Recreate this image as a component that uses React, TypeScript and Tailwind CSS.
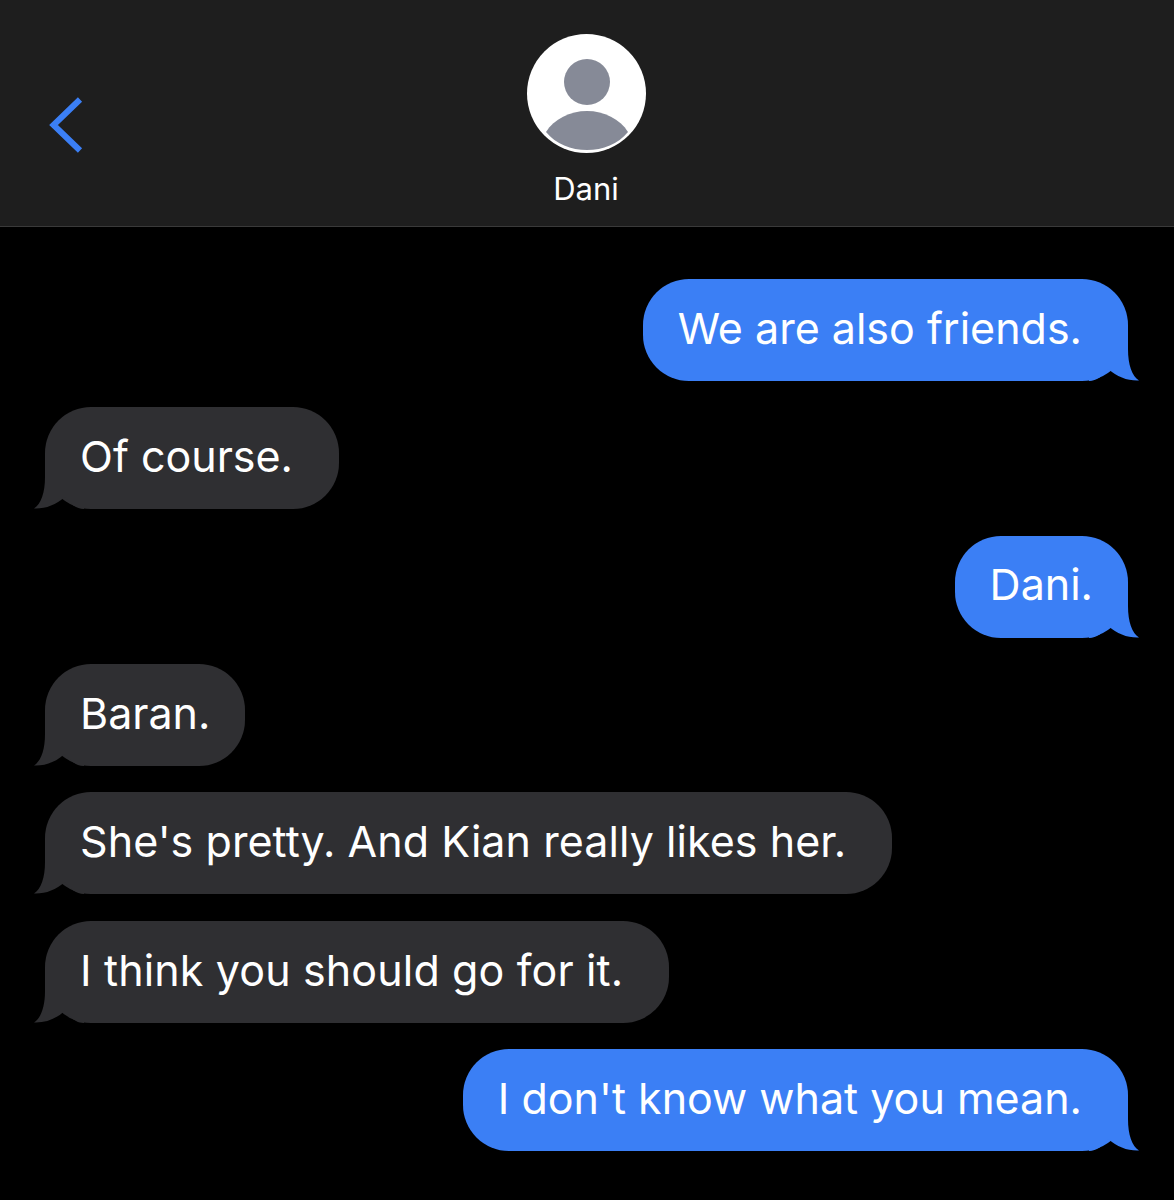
const FONT = "font-['Inter','Liberation_Sans',sans-serif]";

function Tail({ sent }: { sent: boolean }) {
  return (
    <svg
      viewBox="0 0 50 52"
      className={
        sent
          ? "absolute right-[-11px] bottom-0 h-[52px] w-[50px]"
          : "absolute left-[-11px] bottom-0 h-[52px] w-[50px] -scale-x-100"
      }
    >
      <path
        d="M0 0 L39 0 L39 20 C39 36 43 47 50 51.5 C39 52 28 48 19.5 40 C13 47 8 52 0 52 Z"
        fill={sent ? "#3b7ff5" : "#2f2f32"}
      />
    </svg>
  );
}

function Bubble({
  text,
  sent,
  short,
  tracking = "",
}: {
  text: string;
  sent?: boolean;
  short?: boolean;
  tracking?: string;
}) {
  return (
    <div className={sent ? "flex justify-end pr-[46px]" : "flex justify-start pl-[45px]"}>
      <div
        className={[
          "relative flex h-[102px] items-center rounded-[46px] pl-[35px] text-[43px] font-normal text-white whitespace-nowrap",
          sent ? "bg-[#3b7ff5]" : "bg-[#2f2f32]",
          short ? "pr-[35px]" : "pr-[46px]",
        ].join(" ")}
      >
        <Tail sent={!!sent} />
        <span className={`relative top-[-2px] ${tracking}`}>{text}</span>
      </div>
    </div>
  );
}

export default function App() {
  return (
    <div className={`h-[1200px] w-[1174px] overflow-hidden bg-black ${FONT}`}>
      <header className="relative flex h-[227px] flex-col items-center border-b border-[#3a3a3a] bg-[#1e1e1e] pt-[34px]">
        <svg className="absolute left-[46px] top-[94px] h-[62px] w-[40px]" viewBox="0 0 40 62" fill="none">
          <path d="M34 5.5 L7.5 31 L34 56.5" stroke="#3b7ff5" strokeWidth="6" strokeLinejoin="miter" />
        </svg>
        <svg viewBox="0 0 119 119" className="relative left-[-1px] h-[119px] w-[119px]">
          <circle cx="59.5" cy="59.5" r="59.5" fill="#ffffff" />
          <ellipse cx="60" cy="48" rx="23" ry="23" fill="#868a97" />
          <path d="M19 98 C27 85 43 77 60 77 C77 77 93 85 101 98 C91 110 76 116 60 116 C44 116 29 110 19 98 Z" fill="#868a97" />
        </svg>
        <div className="relative left-[-1px] mt-[18px] text-[31px] leading-[36px] text-white">Dani</div>
      </header>
      <main className="flex flex-col gap-[26.4px] pt-[51.8px]">
        <Bubble sent text="We are also friends." />
        <Bubble text="Of course." />
        <Bubble sent short text="Dani." />
        <Bubble short text="Baran." />
        <Bubble text="She's pretty. And Kian really likes her." tracking="tracking-[0.06px]" />
        <Bubble text="I think you should go for it." tracking="tracking-[0.14px]" />
        <Bubble sent text="I don't know what you mean." />
      </main>
    </div>
  );
}
